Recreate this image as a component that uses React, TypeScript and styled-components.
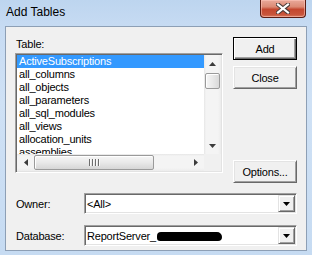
import React from 'react';
import styled, { createGlobalStyle } from 'styled-components';

const Global = createGlobalStyle`
  html, body { margin: 0; padding: 0; }
  body { width: 312px; height: 255px; overflow: hidden; background: #c6dbf2; }
`;

const Window = styled.div`
  width: 312px;
  height: 255px;
  box-sizing: border-box;
  display: flex;
  flex-direction: column;
  background: linear-gradient(180deg, #bdd5ef 0%, #c8dcf3 12%, #cfe1f5 40%, #c6dbf2 100%);
  font-family: "Liberation Sans", Arial, sans-serif;
  font-size: 11px;
  letter-spacing: -0.2px;
  color: #000;
`;

const TitleBar = styled.div`
  height: 26px;
  flex: none;
  display: flex;
  align-items: flex-start;
  justify-content: space-between;
  padding: 0 6px 0 6px;
  box-sizing: border-box;
`;

const Title = styled.div`
  font-size: 12px;
  letter-spacing: 0;
  line-height: 14px;
  padding-top: 5px;
  color: #000;
`;

const CloseBtn = styled.div`
  width: 46px;
  height: 18px;
  box-sizing: border-box;
  border: 1px solid #5a1d14;
  border-top: none;
  border-radius: 0 0 4px 4px;
  background: linear-gradient(180deg, #e9a99a 0%, #dc8a75 40%, #c4472f 55%, #c8553b 85%, #d77a5f 100%);
  box-shadow: inset 0 0 0 1px rgba(255, 200, 190, 0.55);
  display: flex;
  align-items: center;
  justify-content: center;
`;

const Client = styled.div`
  flex: 1;
  margin: 0 5px 4px 5px;
  border: 1px solid #8d9fb5;
  background: #f0f0f0;
  padding: 10px 9px 0 9px;
  display: flex;
  flex-direction: column;
  box-sizing: border-box;
`;

const TopRow = styled.div`
  display: flex;
  justify-content: space-between;
  align-items: flex-start;
`;

const LeftCol = styled.div`
  width: 208px;
  display: flex;
  flex-direction: column;
`;

const Label = styled.div`
  height: 16px;
  line-height: 13px;
  padding-left: 1px;
  padding-top: 1px;
  box-sizing: border-box;
`;

const Sunken = styled.div`
  box-sizing: border-box;
  border: 1px solid;
  border-color: #a0a0a0 #ffffff #ffffff #a0a0a0;
  box-shadow: inset 1px 1px 0 #696969, inset -1px -1px 0 #e3e3e3;
  background: #fff;
`;

const ListBox = styled(Sunken)`
  height: 120px;
  padding: 1px;
  display: grid;
  grid-template-columns: 1fr 17px;
  grid-template-rows: 1fr 17px;
`;

const Items = styled.div`
  overflow: hidden;
  background: #fff;
`;

const Item = styled.div<{ $sel?: boolean }>`
  height: 13px;
  line-height: 13px;
  padding-left: 2px;
  white-space: nowrap;
  background: ${(p) => (p.$sel ? '#3399ff' : 'transparent')};
  color: ${(p) => (p.$sel ? '#fff' : '#000')};
`;

const VScroll = styled.div`
  display: flex;
  flex-direction: column;
  background: linear-gradient(90deg, #e6e6e6 0, #f4f4f4 2px, #f4f4f4 14px, #ececec 17px);
`;

const HScroll = styled.div`
  display: flex;
  flex-direction: row;
  align-items: stretch;
  background: linear-gradient(180deg, #e6e6e6 0, #f4f4f4 2px, #f4f4f4 14px, #ececec 17px);
`;

const Corner = styled.div`
  background: #f0f0f0;
`;

const ArrowBox = styled.div`
  width: 17px;
  height: 17px;
  flex: none;
  display: flex;
  align-items: center;
  justify-content: center;
`;

const VThumb = styled.div`
  margin: 1px 1px 0 1px;
  height: 16px;
  box-sizing: border-box;
  border: 1px solid #9a9a9a;
  border-radius: 2px;
  background: linear-gradient(90deg, #f6f6f6 0%, #e9e9e9 50%, #d9d9d9 100%);
  box-shadow: inset 1px 1px 0 #ffffff;
`;

const HThumb = styled.div`
  margin: 1px 0 1px 0;
  width: 120px;
  box-sizing: border-box;
  border: 1px solid #9a9a9a;
  border-radius: 2px;
  background: linear-gradient(180deg, #f6f6f6 0%, #e9e9e9 50%, #d6d6d6 100%);
  box-shadow: inset 1px 1px 0 #ffffff;
  display: flex;
  align-items: center;
  justify-content: center;
  gap: 2px;
`;

const Grip = styled.div`
  width: 1px;
  height: 7px;
  background: #6e6e6e;
  box-shadow: 1px 0 0 #fafafa;
`;

const Spacer = styled.div`
  flex: 1;
`;

const RightCol = styled.div`
  width: 64px;
  display: flex;
  flex-direction: column;
`;

const Button = styled.div<{ $default?: boolean; $mt?: number }>`
  height: 23px;
  margin-top: ${(p) => p.$mt ?? 0}px;
  box-sizing: border-box;
  display: flex;
  align-items: center;
  justify-content: center;
  background: #f0f0f0;
  ${(p) =>
    p.$default
      ? `border: 1px solid #000;
         box-shadow: inset 1px 1px 0 #ffffff, inset -1px -1px 0 #696969, inset -2px -2px 0 #a0a0a0;`
      : `border: 1px solid; border-color: #ffffff #696969 #696969 #ffffff;
         box-shadow: inset 1px 1px 0 #e3e3e3, inset -1px -1px 0 #a0a0a0;`}
`;

const FieldRow = styled.div<{ $mt: number }>`
  margin-top: ${(p) => p.$mt}px;
  height: 21px;
  display: flex;
  align-items: center;
`;

const FieldLabel = styled.div`
  width: 69px;
  padding-left: 1px;
  box-sizing: border-box;
  flex: none;
`;

const Combo = styled(Sunken)`
  flex: 1;
  height: 21px;
  padding: 1px;
  display: flex;
  align-items: stretch;
`;

const ComboText = styled.div`
  flex: 1;
  padding-left: 1px;
  display: flex;
  align-items: center;
  white-space: nowrap;
`;

const ComboButton = styled.div`
  width: 17px;
  box-sizing: border-box;
  border: 1px solid;
  border-color: #e3e3e3 #696969 #696969 #e3e3e3;
  box-shadow: inset 1px 1px 0 #ffffff, inset -1px -1px 0 #a0a0a0;
  background: #f0f0f0;
  display: flex;
  align-items: center;
  justify-content: center;
`;

const Redaction = styled.span`
  display: inline-block;
  width: 65px;
  height: 9px;
  margin-left: 1px;
  margin-top: 1px;
  background: #000;
  border-radius: 4px 5px 4px 3px;
`;

const Tri = ({ dir, color = '#3c3c3c' }: { dir: 'up' | 'down' | 'left' | 'right'; color?: string }) => {
  const pts: Record<string, string> = {
    up: '0,4 7,4 3.5,0',
    down: '0,0 7,0 3.5,4',
    left: '4,0 4,7 0,3.5',
    right: '0,0 0,7 4,3.5',
  };
  const vertical = dir === 'up' || dir === 'down';
  return (
    <svg width={vertical ? 7 : 4} height={vertical ? 4 : 7} viewBox={vertical ? '0 0 7 4' : '0 0 4 7'}>
      <polygon points={pts[dir]} fill={color} />
    </svg>
  );
};

const items = [
  'ActiveSubscriptions',
  'all_columns',
  'all_objects',
  'all_parameters',
  'all_sql_modules',
  'all_views',
  'allocation_units',
  'assemblies',
];

export default function App() {
  return (
    <>
      <Global />
      <Window>
        <TitleBar>
          <Title>Add Tables</Title>
          <CloseBtn>
            <svg width="14" height="11" viewBox="0 0 14 11">
              <path d="M2 1.5 L12 9.5 M12 1.5 L2 9.5" stroke="#4a3a38" strokeWidth="4.2" strokeLinecap="square" />
              <path d="M2 1.5 L12 9.5 M12 1.5 L2 9.5" stroke="#ffffff" strokeWidth="2.2" strokeLinecap="square" />
            </svg>
          </CloseBtn>
        </TitleBar>
        <Client>
          <TopRow>
            <LeftCol>
              <Label>Table:</Label>
              <ListBox>
                <Items>
                  {items.map((it, i) => (
                    <Item key={it} $sel={i === 0}>
                      {it}
                    </Item>
                  ))}
                </Items>
                <VScroll>
                  <ArrowBox>
                    <Tri dir="up" />
                  </ArrowBox>
                  <VThumb />
                  <Spacer />
                  <ArrowBox>
                    <Tri dir="down" />
                  </ArrowBox>
                </VScroll>
                <HScroll>
                  <ArrowBox>
                    <Tri dir="left" />
                  </ArrowBox>
                  <HThumb>
                    <Grip />
                    <Grip />
                    <Grip />
                    <Grip />
                  </HThumb>
                  <Spacer />
                  <ArrowBox>
                    <Tri dir="right" />
                  </ArrowBox>
                </HScroll>
                <Corner />
              </ListBox>
            </LeftCol>
            <RightCol>
              <Button $default>Add</Button>
              <Button $mt={6}>Close</Button>
              <Button $mt={71}>Options...</Button>
            </RightCol>
          </TopRow>
          <FieldRow $mt={10}>
            <FieldLabel>Owner:</FieldLabel>
            <Combo>
              <ComboText>&lt;All&gt;</ComboText>
              <ComboButton>
                <Tri dir="down" color="#000" />
              </ComboButton>
            </Combo>
          </FieldRow>
          <FieldRow $mt={11}>
            <FieldLabel>Database:</FieldLabel>
            <Combo>
              <ComboText>
                ReportServer_
                <Redaction />
              </ComboText>
              <ComboButton>
                <Tri dir="down" color="#000" />
              </ComboButton>
            </Combo>
          </FieldRow>
        </Client>
      </Window>
    </>
  );
}
